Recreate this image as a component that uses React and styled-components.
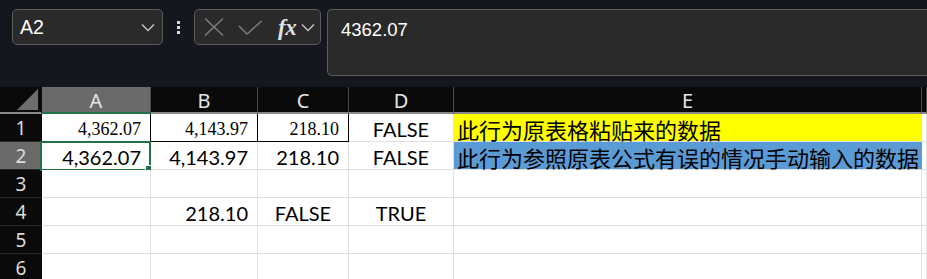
import React from "react";
import styled, { createGlobalStyle } from "styled-components";

const Global = createGlobalStyle`
  html, body { margin: 0; padding: 0; background: #ffffff; }
  body { font-family: "Liberation Sans", Arial, sans-serif; overflow: hidden; }
  * { box-sizing: border-box; }
`;

const Page = styled.div`
  width: 927px;
  height: 279px;
  overflow: hidden;
  display: flex;
  flex-direction: column;
`;

const TopBar = styled.div`
  height: 87px;
  background: #14171d;
  display: flex;
  align-items: flex-start;
  padding: 9px 0 0 12px;
  flex-shrink: 0;
`;

const Box = styled.div`
  background: #2a2a2a;
  border: 1px solid #5c5c5c;
  border-radius: 5px;
  display: flex;
  align-items: center;
  color: #ffffff;
`;

const NameBox = styled(Box)`
  width: 151px;
  height: 36px;
  padding: 0 7px 0 7px;
  justify-content: space-between;
  font-size: 19.5px;
`;

const Dots = styled.div`
  width: 31px;
  height: 36px;
  display: flex;
  flex-direction: column;
  align-items: center;
  justify-content: center;
  gap: 2px;
  span {
    width: 3px;
    height: 3px;
    background: #d8d8d8;
  }
`;

const FxGroup = styled(Box)`
  width: 127px;
  height: 36px;
  padding: 0 4px 0 9px;
`;

const FxText = styled.span`
  font-family: "Liberation Serif", "Times New Roman", serif;
  font-style: italic;
  font-weight: bold;
  font-size: 23px;
  color: #e0e0e0;
  margin-left: 15px;
  margin-right: 5px;
  letter-spacing: -0.5px;
  line-height: 1;
`;

const FormulaBox = styled(Box)`
  margin-left: 6px;
  flex: 1;
  height: 67px;
  border-right: none;
  border-radius: 5px 0 0 5px;
  align-items: flex-start;
  padding: 9px 0 0 13px;
  font-size: 18.5px;
`;

const Grid = styled.div`
  display: grid;
  grid-template-columns: 42px 109px 107px 91px 105px 468px 5px;
  grid-auto-rows: 28px;
  grid-template-rows: 27px;
  background: #ffffff;
`;

const ColHead = styled.div`
  background: ${(p) => (p.$active ? "#6a6a6a" : "#0a0a0a")};
  color: #e6e6e6;
  font-family: "Noto Sans", "Liberation Sans", sans-serif;
  font-size: 20px;
  display: flex;
  align-items: center;
  justify-content: center;
  border-right: 1px solid ${(p) => (p.$corner ? "#0a0a0a" : "#4a4a4a")};
  border-bottom: 2px solid ${(p) => (p.$active ? "#217346" : "#8a8a8a")};
  position: relative;
  line-height: 1;
  padding-top: 2px;
`;

const RowHead = styled.div`
  background: ${(p) => (p.$active ? "#6a6a6a" : "#0a0a0a")};
  color: #dcdcdc;
  font-family: "Noto Sans", "Liberation Sans", sans-serif;
  font-size: 19px;
  line-height: 1;
  display: flex;
  align-items: center;
  justify-content: center;
  border-bottom: 1px solid #262626;
  padding-top: 2px;
`;

const Cell = styled.div`
  position: relative;
  background: ${(p) => p.$bg || "#ffffff"};
  border-right: 1px solid ${(p) => (p.$boxed ? "#000000" : p.$bg ? p.$bg : "#e0e0e0")};
  border-bottom: 1px solid ${(p) => (p.$boxed ? "#000000" : "#e0e0e0")};
  display: flex;
  align-items: center;
  justify-content: ${(p) => (p.$align === "right" ? "flex-end" : p.$align === "center" ? "center" : "flex-start")};
  padding: ${(p) => (p.$align === "left" ? "0 0 0 3px" : p.$align === "right" ? "0 9px 0 0" : "0")};
  color: #000000;
  white-space: nowrap;
  font-family: ${(p) =>
    p.$serif
      ? '"Liberation Serif", "Times New Roman", serif'
      : p.$cjk
      ? '"Noto Sans CJK SC", sans-serif'
      : 'Lato, "Liberation Sans", sans-serif'};
  font-size: ${(p) => (p.$serif ? "18px" : p.$cjk ? "22px" : "20px")};
  line-height: 1;
  padding-top: ${(p) => (p.$serif ? "2px" : "3px")};
`;

const CellText = styled.span`
  display: block;
  line-height: 1;
`;

const Selection = styled.div`
  position: absolute;
  left: -2px;
  top: -1px;
  right: -1px;
  bottom: -2px;
  border: 2px solid #217346;
  pointer-events: none;
  &::after {
    content: "";
    position: absolute;
    right: -4px;
    bottom: -4px;
    width: 6px;
    height: 6px;
    background: #217346;
    border: 1px solid #ffffff;
  }
`;

const Chevron = ({ color = "#c8c8c8" }) => (
  <svg width="14" height="9" viewBox="0 0 14 9" fill="none">
    <path d="M1 1.5 L7 7.5 L13 1.5" stroke={color} strokeWidth="1.4" />
  </svg>
);

const XIcon = () => (
  <svg width="20" height="18" viewBox="0 0 20 18" fill="none">
    <path d="M1 0.5 L19 17.5 M19 0.5 L1 17.5" stroke="#7d7d7d" strokeWidth="1.5" />
  </svg>
);

const CheckIcon = () => (
  <svg width="25" height="15" viewBox="0 0 25 15" fill="none">
    <path d="M1 6 L9 14 L24 0.8" stroke="#7d7d7d" strokeWidth="1.5" />
  </svg>
);

const Corner = () => (
  <svg width="22" height="22" viewBox="0 0 22 22">
    <polygon points="21,0 21,21 0,21" fill="#6d6d6d" />
  </svg>
);

const CornerWrap = styled.div`
  position: absolute;
  right: 2px;
  bottom: 1px;
  display: flex;
`;

const IconSlot = styled.span`
  display: flex;
  align-items: center;
  margin-right: ${(p) => p.$mr || 0}px;
`;

const rows = [
  {
    n: 1,
    cells: [
      { t: "4,362.07", align: "right", serif: true, boxed: true },
      { t: "4,143.97", align: "right", serif: true, boxed: true },
      { t: "218.10", align: "right", serif: true, boxed: true },
      { t: "FALSE", align: "center" },
      { t: "此行为原表格粘贴来的数据", align: "left", cjk: true, bg: "#ffff00" },
    ],
  },
  {
    n: 2,
    active: true,
    cells: [
      { t: "4,362.07", align: "right", sel: true },
      { t: "4,143.97", align: "right" },
      { t: "218.10", align: "right" },
      { t: "FALSE", align: "center" },
      { t: "此行为参照原表公式有误的情况手动输入的数据", align: "left", cjk: true, bg: "#5b9bd5" },
    ],
  },
  { n: 3, cells: [{}, {}, {}, {}, {}] },
  {
    n: 4,
    cells: [
      {},
      { t: "218.10", align: "right" },
      { t: "FALSE", align: "center" },
      { t: "TRUE", align: "center" },
      {},
    ],
  },
  { n: 5, cells: [{}, {}, {}, {}, {}] },
  { n: 6, cells: [{}, {}, {}, {}, {}] },
];

export default function App() {
  return (
    <Page>
      <Global />
      <TopBar>
        <NameBox>
          <span>A2</span>
          <Chevron />
        </NameBox>
        <Dots>
          <span />
          <span />
          <span />
        </Dots>
        <FxGroup>
          <IconSlot $mr={14}>
            <XIcon />
          </IconSlot>
          <IconSlot>
            <CheckIcon />
          </IconSlot>
          <FxText>fx</FxText>
          <Chevron />
        </FxGroup>
        <FormulaBox>4362.07</FormulaBox>
      </TopBar>
      <Grid>
        <ColHead $corner>
          <CornerWrap>
            <Corner />
          </CornerWrap>
        </ColHead>
        <ColHead $active>A</ColHead>
        <ColHead>B</ColHead>
        <ColHead>C</ColHead>
        <ColHead>D</ColHead>
        <ColHead>E</ColHead>
        <ColHead />
        {rows.map((r) => (
          <React.Fragment key={r.n}>
            <RowHead $active={r.active}>{r.n}</RowHead>
            {r.cells.map((c, i) => (
              <Cell
                key={i}
                $align={c.align}
                $serif={c.serif}
                $cjk={c.cjk}
                $bg={c.bg}
                $boxed={c.boxed}
              >
                {c.t && <CellText>{c.t}</CellText>}
                {c.sel && <Selection />}
              </Cell>
            ))}
            <Cell />
          </React.Fragment>
        ))}
      </Grid>
    </Page>
  );
}
